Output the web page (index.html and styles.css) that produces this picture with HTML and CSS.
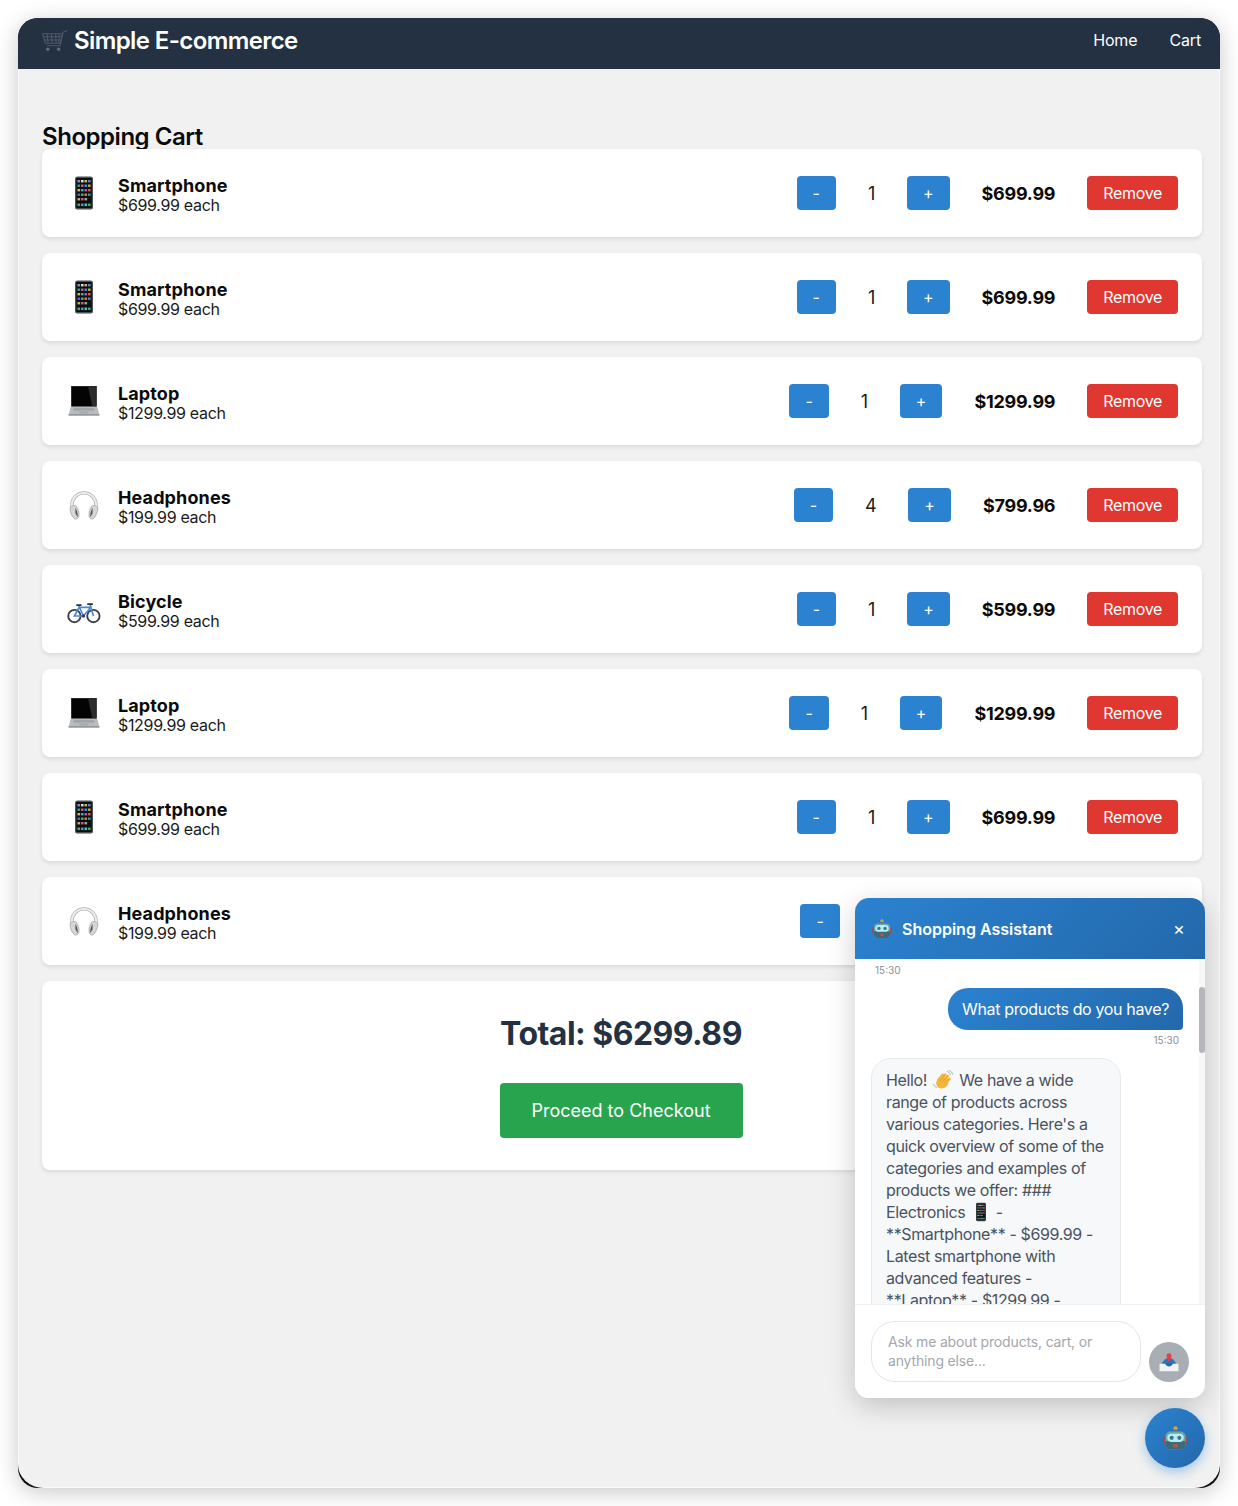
FILE: index.html
```html
<!DOCTYPE html>
<html lang="en">
<head>
<meta charset="utf-8">
<title>Simple E-commerce</title>
<link rel="stylesheet" href="styles.css">
</head>
<body>
<svg class="defs" width="0" height="0" aria-hidden="true">
  <defs>
    <symbol id="i-phone" viewBox="0 0 36 36">
      <rect x="9" y="1.500" width="18" height="33" rx="2.500" fill="#4a5054"/>
      <rect x="10.300" y="3" width="15.400" height="30" fill="#0c0e12"/>
      <g>
        <rect x="11.500" y="5" width="2.600" height="2.400" fill="#8a9aa8"/><rect x="15" y="5" width="2.600" height="2.400" fill="#d9dde0"/><rect x="18.500" y="5" width="2.600" height="2.400" fill="#c9b26a"/><rect x="22" y="5" width="2.600" height="2.400" fill="#5a88b8"/>
        <rect x="11.500" y="9.500" width="2.600" height="2.400" fill="#3f9e8c"/><rect x="15" y="9.500" width="2.600" height="2.400" fill="#c4578c"/><rect x="18.500" y="9.500" width="2.600" height="2.400" fill="#4a8fd0"/><rect x="22" y="9.500" width="2.600" height="2.400" fill="#d8a23a"/>
        <rect x="11.500" y="14" width="2.600" height="2.400" fill="#d8c03a"/><rect x="15" y="14" width="2.600" height="2.400" fill="#3ea8c0"/><rect x="18.500" y="14" width="2.600" height="2.400" fill="#a85ac0"/><rect x="22" y="14" width="2.600" height="2.400" fill="#d25a50"/>
        <rect x="11.500" y="18.500" width="2.600" height="2.400" fill="#5a68c8"/><rect x="15" y="18.500" width="2.600" height="2.400" fill="#58a860"/><rect x="18.500" y="18.500" width="2.600" height="2.400" fill="#d8843a"/><rect x="22" y="18.500" width="2.600" height="2.400" fill="#3f8fa8"/>
        <rect x="11.500" y="23" width="2.600" height="2.400" fill="#c8b050"/><rect x="15" y="23" width="2.600" height="2.400" fill="#c85878"/><rect x="18.500" y="23" width="2.600" height="2.400" fill="#9aa0a8"/>
        <rect x="11.500" y="28.500" width="2.600" height="2.600" fill="#3fb06a"/><rect x="15" y="28.500" width="2.600" height="2.600" fill="#4a8fd0"/><rect x="18.500" y="28.500" width="2.600" height="2.600" fill="#5ac0b0"/><rect x="22" y="28.500" width="2.600" height="2.600" fill="#4fa060"/>
      </g>
    </symbol>
    <symbol id="i-laptop" viewBox="0 0 36 36">
      <g transform="translate(1.400 1.200) scale(.92)">
        <path d="M4 2h28v22.500H4z" fill="#1e2022"/>
        <path d="M5 3h26v21H5z" fill="#040404"/>
        <path d="M22.500 3H31v21h-4z" fill="#2a2c2e"/>
        <path d="M3.500 24.500h29L34.500 33h-33z" fill="#b9bcbf"/>
        <rect x="1" y="32.500" width="34" height="1.700" rx=".8" fill="#96999c"/>
        <rect x="6.500" y="25.800" width="23" height="3" fill="#a2a5a8"/>
        <rect x="13" y="29.500" width="10" height="2.500" fill="#a9acaf"/>
      </g>
    </symbol>
    <symbol id="i-phones" viewBox="0 0 36 36">
      <g transform="translate(1.800 2.800) scale(.9)">
        <path d="M4.500 20V17a13.500 13.500 0 0 1 27 0v3" fill="none" stroke="#aeb1b4" stroke-width="3.600"/>
        <path d="M4.500 20V17a13.500 13.500 0 0 1 27 0v3" fill="none" stroke="#eceded" stroke-width="2.200"/>
        <path d="M2.500 21c0-3 4.300-4.500 6.500-3 2.400 1.800 4 8 3.300 11.500-.4 2.200-3 4-5 2.300C4.500 29.800 2.500 24.500 2.500 21z" fill="#d4d6d8" stroke="#9a9da0" stroke-width=".8"/>
        <path d="M33.500 21c0-3-4.300-4.500-6.500-3-2.400 1.800-4 8-3.300 11.500.4 2.200 3 4 5 2.300 2.300-2 4.300-7.300 4.800-10.800z" fill="#d4d6d8" stroke="#9a9da0" stroke-width=".8"/>
        <path d="M8.500 20c1.500 2.500 2.800 6.500 2.500 10.500L8.500 26zM27.500 20c-1.500 2.500-2.800 6.500-2.500 10.500L27.500 26z" fill="#4c5054"/>
      </g>
    </symbol>
    <symbol id="i-bike" viewBox="0 0 36 36">
      <g transform="translate(.800 2.200) scale(.95)">
        <g fill="none">
          <circle cx="8" cy="24" r="6.500" stroke="#3c4148" stroke-width="2"/>
          <circle cx="28" cy="24" r="6.500" stroke="#3c4148" stroke-width="2"/>
          <path d="M8 24 13 15h12l-7.500 9zM12.500 13l5 11M24.500 12l3.500 12" stroke="#4a8adb" stroke-width="1.800"/>
          <path d="M10 12.500h5.500M21.500 11.500h6" stroke="#2d3238" stroke-width="1.800"/>
        </g>
        <circle cx="17.500" cy="24" r="1.800" fill="#3c4148"/>
      </g>
    </symbol>
    <symbol id="i-cart" viewBox="0 0 36 36">
      <g fill="none" stroke="#4f5a65" stroke-width="1.500">
        <path d="M35 3.500 29 6l-4 18.500H7"/>
        <path d="M1 8h27.500L25.500 21H4.500zM7 8l1.500 13M13 8l1 13M19 8l.5 13M24 8l-1 13M2.500 12h25M3.500 16.500h23"/>
      </g>
      <circle cx="8" cy="29.500" r="2.400" fill="#606b75"/>
      <circle cx="23" cy="29.500" r="2.400" fill="#606b75"/>
    </symbol>
    <symbol id="i-bot" viewBox="0 0 36 36">
      <circle cx="18" cy="3.500" r="3" fill="#d9a441"/>
      <rect x="16.500" y="5" width="3" height="5" fill="#7d6a4a"/>
      <rect x="0.500" y="15" width="6" height="11" rx="2.500" fill="#a8493f"/>
      <rect x="29.500" y="15" width="6" height="11" rx="2.500" fill="#a8493f"/>
      <rect x="3.500" y="8" width="29" height="26" rx="7" fill="#6aa6b0"/>
      <path d="M3.500 22h29v5a7 7 0 0 1-7 7h-15a7 7 0 0 1-7-7z" fill="#3f6878"/>
      <rect x="6" y="11" width="24" height="12" rx="6" fill="#b4edf2"/>
      <circle cx="12.500" cy="17" r="3" fill="#3f7488"/>
      <circle cx="23.500" cy="17" r="3" fill="#3f7488"/>
      <rect x="14" y="26" width="8" height="5" rx="2" fill="#a5584e"/>
    </symbol>
    <symbol id="i-wave" viewBox="0 0 36 36">
      <g fill="none" stroke="#f3b53c" stroke-width="5" stroke-linecap="round">
        <path d="M10 18 17.500 9"/>
        <path d="M13 21 22 8.500"/>
        <path d="M16.500 23 26.500 11"/>
        <path d="M20 25 29.500 16"/>
      </g>
      <path d="M9 16c-2 2-4 5-3 10 1.500 6 8 9 14 6.500 5-2 7-6 8-10l-6-9z" fill="#f3b53c"/>
      <path d="M12.500 20.500 21 9M16 23 25.500 11.500M19.500 25 28.500 16.500" fill="none" stroke="#d48f24" stroke-width=".8"/>
      <path d="M25 2.500c3 .5 6 3.500 6.500 6.500M28.500 .8c3.500.8 6.500 4 7 7.500M1 25c.5 3 3 6 6 6.500" fill="none" stroke="#9da2a8" stroke-width="1.500"/>
    </symbol>
    <symbol id="i-tray" viewBox="0 0 36 36">
      <path d="M7 19 12 13h12l5 6v3H7z" fill="#2f72b8"/>
      <path d="M2.500 21h9.500c1 3 3 4.500 6 4.500s5-1.500 6-4.500h9.500v12h-31z" fill="#f1f3f4"/>
      <path d="M12 20h12c-1 3.500-3 5-6 5s-5-1.500-6-5z" fill="#2766a8"/>
      <path d="M18 17 12.500 10.500h3V6h5v4.500h3z" fill="#e5404a"/>
      <circle cx="18" cy="7.500" r="4" fill="#e5404a"/>
    </symbol>
  </defs>
</svg>

<div class="window">
  <header class="topbar">
    <div class="brand"><svg class="brand-icon"><use href="#i-cart"/></svg><span>Simple E-commerce</span></div>
    <nav class="nav"><a href="#">Home</a><a href="#">Cart</a></nav>
  </header>

  <main class="content">
    <h2 class="title">Shopping Cart</h2>
    <div class="items">
      <article class="item">
        <svg class="thumb"><use href="#i-phone"/></svg>
        <div class="info"><h3>Smartphone</h3><p>$699.99 each</p></div>
        <div class="controls"><button class="qty-btn">-</button><span class="qty">1</span><button class="qty-btn">+</button></div>
        <strong class="line-total">$699.99</strong>
        <button class="remove">Remove</button>
      </article>
      <article class="item">
        <svg class="thumb"><use href="#i-phone"/></svg>
        <div class="info"><h3>Smartphone</h3><p>$699.99 each</p></div>
        <div class="controls"><button class="qty-btn">-</button><span class="qty">1</span><button class="qty-btn">+</button></div>
        <strong class="line-total">$699.99</strong>
        <button class="remove">Remove</button>
      </article>
      <article class="item">
        <svg class="thumb"><use href="#i-laptop"/></svg>
        <div class="info"><h3>Laptop</h3><p>$1299.99 each</p></div>
        <div class="controls"><button class="qty-btn">-</button><span class="qty">1</span><button class="qty-btn">+</button></div>
        <strong class="line-total">$1299.99</strong>
        <button class="remove">Remove</button>
      </article>
      <article class="item">
        <svg class="thumb"><use href="#i-phones"/></svg>
        <div class="info"><h3>Headphones</h3><p>$199.99 each</p></div>
        <div class="controls"><button class="qty-btn">-</button><span class="qty">4</span><button class="qty-btn">+</button></div>
        <strong class="line-total">$799.96</strong>
        <button class="remove">Remove</button>
      </article>
      <article class="item">
        <svg class="thumb"><use href="#i-bike"/></svg>
        <div class="info"><h3>Bicycle</h3><p>$599.99 each</p></div>
        <div class="controls"><button class="qty-btn">-</button><span class="qty">1</span><button class="qty-btn">+</button></div>
        <strong class="line-total">$599.99</strong>
        <button class="remove">Remove</button>
      </article>
      <article class="item">
        <svg class="thumb"><use href="#i-laptop"/></svg>
        <div class="info"><h3>Laptop</h3><p>$1299.99 each</p></div>
        <div class="controls"><button class="qty-btn">-</button><span class="qty">1</span><button class="qty-btn">+</button></div>
        <strong class="line-total">$1299.99</strong>
        <button class="remove">Remove</button>
      </article>
      <article class="item">
        <svg class="thumb"><use href="#i-phone"/></svg>
        <div class="info"><h3>Smartphone</h3><p>$699.99 each</p></div>
        <div class="controls"><button class="qty-btn">-</button><span class="qty">1</span><button class="qty-btn">+</button></div>
        <strong class="line-total">$699.99</strong>
        <button class="remove">Remove</button>
      </article>
      <article class="item">
        <svg class="thumb"><use href="#i-phones"/></svg>
        <div class="info"><h3>Headphones</h3><p>$199.99 each</p></div>
        <div class="controls"><button class="qty-btn">-</button><span class="qty">1</span><button class="qty-btn">+</button></div>
        <strong class="line-total">$199.99</strong>
        <button class="remove">Remove</button>
      </article>
      <section class="summary">
        <h2>Total: $6299.89</h2>
        <button class="checkout">Proceed to Checkout</button>
      </section>
    </div>
  </main>

  <aside class="chat">
    <div class="chat-head">
      <div class="chat-title"><svg class="chat-bot"><use href="#i-bot"/></svg><span>Shopping Assistant</span></div>
      <span class="chat-close">×</span>
    </div>
    <div class="chat-log">
      <div class="stamp">15:30</div>
      <div class="bubble-user">What products do you have?</div>
      <div class="stamp stamp-right">15:30</div>
      <div class="bubble-bot">Hello! <svg class="inline-emoji inline-wave"><use href="#i-wave"/></svg> We have a wide range of products across various categories. Here's a quick overview of some of the categories and examples of products we offer: ### Electronics <svg class="inline-emoji"><use href="#i-phone"/></svg> - **Smartphone** - $699.99 - Latest smartphone with advanced features - **Laptop** - $1299.99 - <span class="nowrap">High-performance</span> laptop for work and play</div>
      <div class="scroll-track"><div class="scroll-thumb"></div></div>
    </div>
    <div class="chat-input">
      <div class="chat-field">Ask me about products, cart, or anything else...</div>
      <button class="chat-send"><svg class="send-icon"><use href="#i-tray"/></svg></button>
    </div>
  </aside>

  <button class="fab"><svg class="fab-icon"><use href="#i-bot"/></svg></button>
</div>
</body>
</html>
```

FILE: styles.css
```css
* { box-sizing: border-box; }
html, body { margin: 0; background: #fff; }
body {
  padding: 18px;
  height: 1506px;
  overflow: hidden;
  font-family: Inter, "Liberation Sans", sans-serif;
  color: #111;
}
.defs { position: absolute; }

.window {
  position: relative;
  width: 1202px;
  height: 1470px;
  border-radius: 20px;
  background: #111;
  overflow: hidden;
}
body::before {
  content: "";
  position: absolute;
  left: 18px;
  top: 18px;
  width: 1202px;
  height: 1470px;
  border-radius: 20px;
  box-shadow: 0 4px 22px rgba(0, 0, 0, .22);
}

.topbar {
  height: 51px;
  padding: 0 19px 6px 24px;
  background: #233142;
  color: #fff;
  display: flex;
  align-items: center;
  justify-content: space-between;
}
.brand {
  display: flex;
  align-items: center;
  gap: 6px;
  font-size: 24px;
  font-weight: 600;
  letter-spacing: -.6px;
}
.brand-icon { width: 26px; height: 26px; }
.nav { display: flex; gap: 32px; margin-bottom: 2px; font-size: 16px; letter-spacing: -.15px; }
.nav a { color: #fff; text-decoration: none; }

.content {
  position: relative;
  height: 1419px;
  padding: 55px 17px 0 23px;
  background: #f1f1f1;
  border-radius: 0 0 26px 26px / 0 0 24px 24px;
  border: 1px solid #fafafa;
  border-top: 0;
}
.title {
  margin: 0;
  font-size: 24px;
  line-height: 25px;
  font-weight: 600;
  letter-spacing: -.46px;
  color: #0b0b0b;
}
.items { display: flex; flex-direction: column; gap: 16px; }

.item {
  height: 88px;
  padding: 0 24px;
  display: flex;
  align-items: center;
  gap: 32px;
  background: #fff;
  border-radius: 8px;
  box-shadow: 0 2px 4px rgba(0, 0, 0, .1);
}
.thumb { width: 36px; height: 36px; flex: none; margin-right: -16px; }
.info { flex: 1; padding-top: 4px; }
.info h3 {
  margin: 0;
  font-size: 18px;
  line-height: 20px;
  font-weight: 700;
  letter-spacing: .12px;
  color: #0b0b0b;
}
.info p { margin: 0; font-size: 16px; line-height: 19px; letter-spacing: -.33px; color: #1a1a1a; }
.controls { display: flex; align-items: center; gap: 32px; }
.qty { font-size: 18px; letter-spacing: -.3px; color: #1a1a1a; }
.line-total { font-size: 18px; font-weight: 700; letter-spacing: -.25px; color: #0b0b0b; }

.qty-btn, .remove, .checkout, .chat-send, .fab {
  border: 0;
  font-family: inherit;
  color: #fff;
}
.qty-btn, .remove {
  height: 34px;
  padding: 0 16px;
  font-size: 16px;
  border-radius: 4px;
}
.qty-btn { background: #2b82d0; }
.remove { background: #e03731; letter-spacing: -.33px; }

.summary {
  height: 189px;
  padding: 33px 2px 0 0;
  background: #fff;
  border-radius: 8px;
  box-shadow: 0 2px 4px rgba(0, 0, 0, .1);
  display: flex;
  flex-direction: column;
  align-items: center;
}
.summary h2 {
  margin: 0 0 30px;
  font-size: 32px;
  line-height: 39px;
  font-weight: 700;
  letter-spacing: -.53px;
  color: #233142;
}
.checkout {
  width: 243px;
  height: 55px;
  font-size: 18px;
  background: #28a44f;
  border-radius: 4px;
}

.chat {
  position: absolute;
  left: 837px;
  top: 880px;
  width: 350px;
  height: 500px;
  background: #fff;
  border-radius: 14px;
  box-shadow: 0 8px 28px rgba(0, 0, 0, .2);
  overflow: hidden;
  display: flex;
  flex-direction: column;
}
.chat-head {
  height: 61px;
  flex: none;
  padding: 0 20px 0 17px;
  background: linear-gradient(135deg, #2b82d0, #2368ab);
  color: #fff;
  display: flex;
  align-items: center;
  justify-content: space-between;
}
.chat-title { display: flex; align-items: center; gap: 10px; font-size: 16px; font-weight: 600; }
.chat-bot { width: 20px; height: 20px; }
.chat-close { font-size: 18px; line-height: 1; }

.chat-log {
  position: relative;
  flex: 1;
  min-height: 0;
  overflow: hidden;
  padding: 5px 22px 0 16px;
}
.stamp { font-size: 10px; line-height: 12px; color: #8b9097; padding-left: 4px; }
.stamp-right { text-align: right; padding: 0 4px 0 0; margin: 4px 0 12px; }
.bubble-user {
  width: fit-content;
  margin: 12px 0 0 auto;
  padding: 10px 14px;
  font-size: 16px;
  line-height: 22px;
  letter-spacing: -.35px;
  color: #fff;
  background: linear-gradient(135deg, #2b82d0, #2368ab);
  border-radius: 20px 20px 4px 20px;
}
.bubble-bot {
  width: 250px;
  padding: 10px 14px;
  font-size: 16px;
  line-height: 22px;
  letter-spacing: -.37px;
  color: #4a5260;
  background: #f6f8fa;
  border: 1px solid #e6e9ee;
  border-radius: 20px;
}
.nowrap { white-space: nowrap; }
.inline-emoji { width: 22px; height: 20px; vertical-align: -4px; }
.inline-wave { width: 24px; }
.scroll-track {
  position: absolute;
  right: 0;
  top: 0;
  bottom: 0;
  width: 6px;
  background: #f7f7f7;
}
.scroll-thumb {
  position: absolute;
  right: 0;
  top: 28px;
  width: 6px;
  height: 66px;
  border-radius: 3px;
  background: #b4b6b9;
}

.chat-input {
  flex: none;
  height: 94px;
  padding: 16px;
  display: flex;
  align-items: flex-end;
  gap: 8px;
  background: #fff;
  border-top: 1px solid #eef0f2;
}
.chat-field {
  flex: 1;
  height: 61px;
  padding: 10px 16px;
  font-size: 14px;
  line-height: 19px;
  letter-spacing: -.16px;
  color: #a3a7ad;
  border: 1px solid #e2e5e9;
  border-radius: 24px;
}
.chat-send {
  width: 40px;
  height: 40px;
  padding: 0;
  border-radius: 50%;
  background: #a9aeb4;
  display: flex;
  align-items: center;
  justify-content: center;
}
.send-icon { width: 22px; height: 22px; }

.fab {
  position: absolute;
  left: 1127px;
  top: 1390px;
  width: 60px;
  height: 60px;
  padding: 0;
  border-radius: 50%;
  background: linear-gradient(135deg, #2b82d0, #2368ab);
  box-shadow: 0 4px 12px rgba(43, 130, 208, .4);
  display: flex;
  align-items: center;
  justify-content: center;
}
.fab-icon { width: 25px; height: 25px; }
```
